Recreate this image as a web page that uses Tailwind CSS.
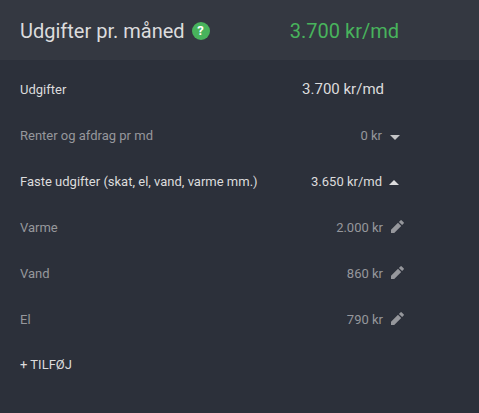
<!DOCTYPE html>
<html lang="da">
<head>
<meta charset="utf-8">
<title>Udgifter pr. måned</title>
<script src="https://cdn.jsdelivr.net/npm/@tailwindcss/browser@4"></script>
</head>
<body class="h-[413px] overflow-hidden bg-[#2c303a] font-[Roboto,sans-serif] text-[13px] text-[#dcdcdd]">
<header class="flex h-[60px] items-center bg-[#343841] pr-20 pl-5 pt-0.5">
  <h1 class="text-[20px]">Udgifter pr. måned</h1>
  <span class="ml-[7px] flex size-[18px] items-center justify-center rounded-full bg-[#48b35c] text-[13px] font-bold text-white">?</span>
  <span class="ml-auto text-[20px] text-[#48b35c]">3.700 kr/md</span>
</header>
<main class="pl-5">
  <div class="flex h-[46px] w-[364px] items-center justify-between pt-[13px]"><span>Udgifter</span><span class="text-[15px]">3.700 kr/md</span></div>
  <div class="flex h-[46px] items-center pt-[13px] text-[#96979c]">
    <span class="w-[240px]">Renter og afdrag pr md</span><span class="w-[122px] text-right">0 kr</span>
    <svg class="mt-[4px] ml-2 h-[5px] w-[10px]" viewBox="0 0 10 5" fill="#c4c4c6"><path d="M0 0h10L5 5z"/></svg>
  </div>
  <div class="flex h-[46px] items-center pt-[13px]">
    <span class="w-[240px]">Faste udgifter (skat, el, vand, varme mm.)</span><span class="w-[122px] text-right">3.650 kr/md</span>
    <svg class="mt-[2px] ml-[7px] h-[5px] w-[10px]" viewBox="0 0 10 5" fill="#dcdcdd"><path d="M0 5h10L5 0z"/></svg>
  </div>
  <div class="flex h-[46px] items-center pt-[13px] text-[#96979c]">
    <span class="w-[240px]">Varme</span><span class="w-[123px] text-right">2.000 kr</span>
    <svg class="-mt-[2px] ml-[8px] size-[13px]" viewBox="0 0 13 13" fill="currentColor"><path d="M0 9.8V13h3.2l7-7-3.2-3.2zM7.9 1.9l3.2 3.2 1.5-1.5a1 1 0 0 0 0-1.4L10.8.4a1 1 0 0 0-1.4 0z"/></svg>
  </div>
  <div class="flex h-[46px] items-center pt-[13px] text-[#96979c]">
    <span class="w-[240px]">Vand</span><span class="w-[123px] text-right">860 kr</span>
    <svg class="-mt-[2px] ml-[8px] size-[13px]" viewBox="0 0 13 13" fill="currentColor"><path d="M0 9.8V13h3.2l7-7-3.2-3.2zM7.9 1.9l3.2 3.2 1.5-1.5a1 1 0 0 0 0-1.4L10.8.4a1 1 0 0 0-1.4 0z"/></svg>
  </div>
  <div class="flex h-[46px] items-center pt-[13px] text-[#96979c]">
    <span class="w-[240px]">El</span><span class="w-[123px] text-right">790 kr</span>
    <svg class="-mt-[2px] ml-[8px] size-[13px]" viewBox="0 0 13 13" fill="currentColor"><path d="M0 9.8V13h3.2l7-7-3.2-3.2zM7.9 1.9l3.2 3.2 1.5-1.5a1 1 0 0 0 0-1.4L10.8.4a1 1 0 0 0-1.4 0z"/></svg>
  </div>
  <button class="flex h-[46px] items-center pt-[12px]">+ TILFØJ</button>
</main>
</body>
</html>
